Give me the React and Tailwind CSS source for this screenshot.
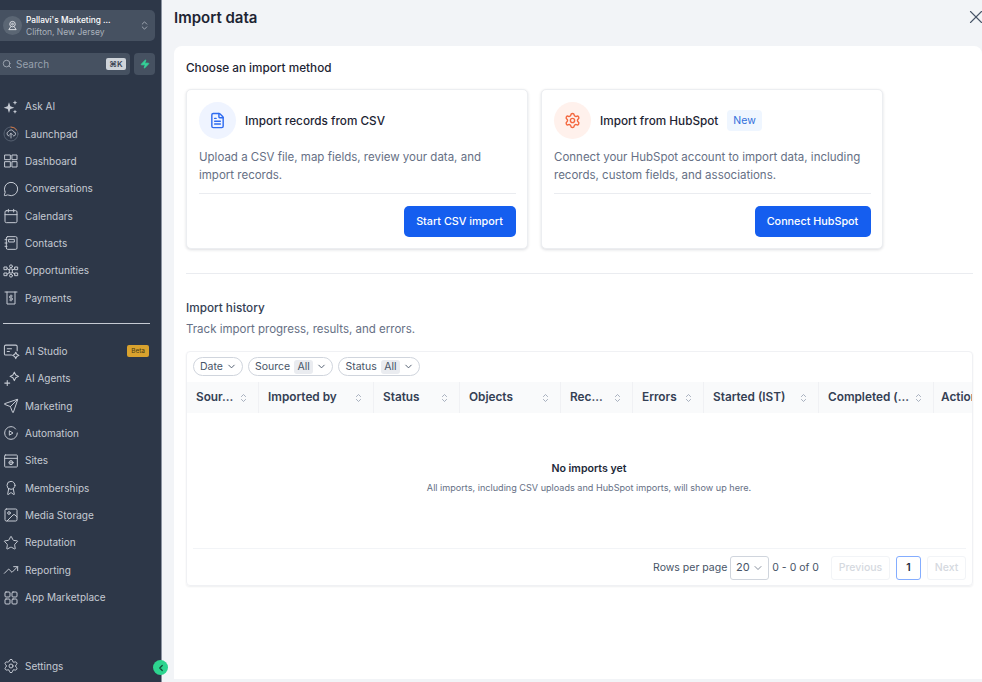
import React from "react";
import { ChevronDown, ChevronLeft, ChevronsUpDown, Search, Zap, X, MessageCircle, Calendar, Send, Star, TrendingUp, Settings, Image, Award, FileText } from "lucide-react";

const S = ({ children, className = "" }) => (
  <svg viewBox="0 0 24 24" fill="none" stroke="currentColor" strokeWidth="1.500" strokeLinecap="round" strokeLinejoin="round" className={className}>{children}</svg>
);
const ic = "w-[16px] h-[16px]";
const AskAI = () => (
  <svg viewBox="0 0 24 24" className={ic} fill="currentColor"><path d="M9 5l2 6 6 2-6 2-2 6-2-6-6-2 6-2z" /><path d="M18 2l1 2.500L21.500 5.500 19 6.500 18 9l-1-2.500L14.500 5.500 17 4.500zM18 16l1 2 2 1-2 1-1 2-1-2-2-1 2-1z" /></svg>
);
const Launch = () => (
  <svg viewBox="0 0 24 24" className="w-[16px] h-[16px]" fill="none" stroke="currentColor" strokeWidth="1.300" strokeLinecap="round" strokeLinejoin="round">
    <circle cx="12" cy="12" r="10.500" stroke="#5b6676" />
    <path d="M12 1.500a10.500 10.500 0 0 1 8.500 4.500" stroke="#e8793a" />
    <path d="M9 15a3.500 3.500 0 0 1-.5-6.800 4 4 0 0 1 7.500.6A3 3 0 0 1 15.500 15M12 18v-7M10 13l2-2 2 2" />
  </svg>
);
const Dash = () => <S className={ic}><rect x="3" y="3" width="8" height="7" /><rect x="14" y="3" width="7" height="7" /><rect x="3" y="13" width="8" height="8" /><rect x="14" y="13" width="7" height="8" /></S>;
const Contacts = () => <S className={ic}><rect x="5" y="2.500" width="16" height="19" rx="2" /><rect x="9" y="6.500" width="8" height="4" /><path d="M3 7h3M3 12h3M3 17h3" /></S>;
const Opp = () => <S className={ic}><circle cx="12" cy="5" r="2.200" /><circle cx="12" cy="19" r="2.200" /><rect x="10" y="9" width="4" height="6" /><path d="M2 6h4v4H2zM18 6h4v4h-4zM2 15h4v4H2zM18 15h4v4h-4zM6 8l4 3M18 8l-4 3M6 17l4-3M18 17l-4-3" /></S>;
const Pay = () => <S className={ic}><path d="M3 3h18M6 3v18h12V3" /><path d="M14 9h-3a1.500 1.500 0 0 0 0 3h2a1.500 1.500 0 0 1 0 3h-3M12 7.500v9" strokeWidth="1.300" /></S>;
const Studio = () => <S className="w-[17px] h-[17px]"><path d="M12 17H4a2 2 0 0 1-2-2V5a2 2 0 0 1 2-2h14a2 2 0 0 1 2 2v6" /><path d="M6 8h6M6 12h3" /><path d="M18 13l1.500 3 3 1.500-3 1.500-1.500 3-1.500-3-3-1.500 3-1.500z" /></S>;
const Agents = () => <S className="w-[17px] h-[17px]"><path d="M16 3l2 4 4 2-4 2-2 4-2-4-4-2 4-2z" /><path d="M6 15v7M2.500 18.500h7" /></S>;
const Auto = () => <S className={ic}><path d="M21.500 12A9.500 9.500 0 1 1 12 2.500c3 0 5.500 1.300 7 3.500" /><path d="M10 9l5 3-5 3z" /></S>;
const Sites = () => <S className={ic}><rect x="2.500" y="3" width="19" height="18" rx="1" /><path d="M2.500 8h19" /><circle cx="12" cy="14.500" r="3" /><path d="M9 14.500h6M12 11.500v6" strokeWidth="1" /></S>;
const Market = () => <S className={ic}><rect x="3" y="3" width="7.500" height="7.500" rx="1.500" /><rect x="13.500" y="3" width="7.500" height="7.500" rx="1.500" /><rect x="3" y="13.500" width="7.500" height="7.500" rx="1.500" /><rect x="13.500" y="13.500" width="7.500" height="7.500" rx="1.500" /></S>;

const L = (I) => () => <I className={ic} strokeWidth={1.500} />;
const top = [
  ["Ask AI", AskAI], ["Launchpad", Launch], ["Dashboard", Dash], ["Conversations", L(MessageCircle)],
  ["Calendars", L(Calendar)], ["Contacts", Contacts], ["Opportunities", Opp], ["Payments", Pay],
];
const bottom = [
  ["AI Studio", Studio], ["AI Agents", Agents], ["Marketing", L(Send)], ["Automation", Auto], ["Sites", Sites],
  ["Memberships", L(Award)], ["Media Storage", L(Image)], ["Reputation", L(Star)], ["Reporting", L(TrendingUp)], ["App Marketplace", Market],
];

function NavRow({ label, Icon }) {
  return (
    <div className="h-[27.35px] flex items-center pl-[3px] pr-[12px] text-[#c5cad3] text-[10px] font-normal">
      <span className="w-[22px] flex items-center shrink-0"><Icon /></span>
      <span className="flex-1">{label}</span>
      {label === "AI Studio" && <span className="bg-[#d9a22e] text-[#4a3a14] text-[6.500px] rounded-[2px] px-[4px] h-[12px] flex items-center">Beta</span>}
    </div>
  );
}

function Sidebar() {
  return (
    <aside className="relative w-[162px] shrink-0 h-full bg-[#2d3748] border-r border-[#8b93a1] flex flex-col">
      <div className="mt-[10px] w-[155px] h-[31px] bg-[#465161] rounded-r-[5px] flex items-center pl-[3px] pr-[5px]">
        <span className="w-[19px] h-[19px] rounded-full bg-[#5b6674] flex items-center justify-center text-[#e5e7eb] shrink-0">
          <svg viewBox="0 0 24 24" className="w-[11px] h-[11px]" fill="none" stroke="currentColor" strokeWidth="2"><circle cx="12" cy="9" r="6" /><circle cx="12" cy="9" r="2" /><path d="M8 15l-4 6h16l-4-6" /></svg>
        </span>
        <div className="ml-[4px] pt-[2px] flex-1 min-w-0 leading-none">
          <div className="text-[8.300px] text-white font-medium leading-[11px] whitespace-nowrap">Pallavi's Marketing ...</div>
          <div className="text-[8.500px] text-[#aab1bc] leading-[12px] whitespace-nowrap">Clifton, New Jersey</div>
        </div>
        <ChevronsUpDown className="w-[11px] h-[15px] text-[#c5cad3]" strokeWidth={1.500} />
      </div>
      <div className="mt-[12px] flex h-[22px] gap-[4px]">
        <div className="w-[130px] bg-[#465161] rounded-r-[4px] flex items-center pl-[2px] pr-[4px]">
          <Search className="w-[10px] h-[10px] text-[#aab1bc]" strokeWidth={2} />
          <span className="ml-[4px] flex-1 text-[10px] text-[#98a1ae]">Search</span>
          <span className="h-[12px] w-[20px] bg-[#cfd4da] rounded-[2px] text-[#374151] text-[8px] font-semibold flex items-center justify-center">⌘K</span>
        </div>
        <div className="w-[21px] bg-[#465161] rounded-[4px] flex items-center justify-center">
          <Zap className="w-[10px] h-[10px] text-[#34d399]" fill="#34d399" />
        </div>
      </div>
      <nav className="mt-[18px]">
        {top.map(([l, I]) => <NavRow key={l} label={l} Icon={I} />)}
      </nav>
      <div className="ml-[3px] w-[147px] mt-[11px] mb-[14px] h-px bg-[#c5cad3]" />
      <nav>
        {bottom.map(([l, I]) => <NavRow key={l} label={l} Icon={I} />)}
      </nav>
      <div className="mt-auto mb-[2px]">
        <NavRow label="Settings" Icon={L(Settings)} />
      </div>
      <span className="absolute right-[-7px] bottom-[7px] w-[15px] h-[15px] rounded-full bg-[#2dd48f] flex items-center justify-center text-[#134e3a]">
        <ChevronLeft className="w-[10px] h-[10px]" strokeWidth={3} />
      </span>
    </aside>
  );
}

function MethodCard({ iconBg, icon, title, badge, desc, cta, btnW }) {
  return (
    <div className="w-[342px] h-[160px] rounded-[5px] bg-white border border-[#eceef1] shadow-[0_1px_3px_rgba(16,24,40,0.14)] pl-[12px] pr-[11.500px] pt-[12px] flex flex-col">
      <div className="flex items-center h-[37px]">
        <span className={`w-[37px] h-[37px] rounded-full flex items-center justify-center ${iconBg}`}>{icon}</span>
        <span className="ml-[9px] pt-[2px] text-[11.750px] font-medium text-[#1d2433]">{title}</span>
        {badge && <span className="ml-[9px] h-[21px] px-[6px] rounded-[4px] bg-[#eff6ff] text-[#2f6fdb] text-[10.500px] flex items-center">New</span>}
      </div>
      <p className="mt-[9px] text-[11.500px] leading-[18.300px] text-[#667085] whitespace-pre-line">{desc}</p>
      <div className="mt-[8px] border-t border-[#eaecf0] flex justify-end pt-[12px]">
        <button className={`h-[31px] pt-[1px] rounded-[5px] bg-[#155eef] text-white text-[10.800px] font-medium ${btnW}`}>{cta}</button>
      </div>
    </div>
  );
}

const SortIcon = () => (
  <svg viewBox="0 0 10 14" className="w-[7px] h-[10px] text-[#98a2b3] shrink-0" fill="none" stroke="currentColor" strokeWidth="1.200" strokeLinecap="round" strokeLinejoin="round"><path d="M2 5l3-3 3 3M2 9l3 3 3-3" /></svg>
);

const cols = [["Sour...", 72], ["Imported by", 115], ["Status", 86], ["Objects", 101], ["Rec...", 72], ["Errors", 71], ["Started (IST)", 115], ["Completed (...", 115], ["Actions", 60]];

function Chip({ label, val }) {
  return (
    <span className="h-[19px] rounded-full border border-[#d0d5dd] flex items-center pl-[6px] pr-[5px] text-[10.500px] text-[#475467]">
      {label}
      {val && <span className="ml-[4px] px-[3.500px] rounded-[3px] bg-[#eaecf0] text-[#475467] leading-[14px]">{val}</span>}
      <ChevronDown className="ml-[3px] w-[11px] h-[11px]" />
    </span>
  );
}

function Table() {
  return (
    <div className="mt-[14px] w-[787px] h-[235px] rounded-[4px] border border-[#f0f1f4] shadow-[0_1px_2px_rgba(16,24,40,0.07)] flex flex-col overflow-hidden">
      <div className="h-[30px] pb-[1px] flex items-center gap-[5px] pl-[6px] shrink-0">
        <Chip label="Date" />
        <Chip label="Source" val="All" />
        <Chip label="Status" val="All" />
      </div>
      <div className="h-[31px] bg-[#f9fafb] flex shrink-0 overflow-hidden">
        {cols.map(([c, w], i) => (
          <div key={c} style={{ width: w }} className={`shrink-0 flex items-center justify-between pt-[1px] text-[11.800px] font-semibold text-[#344054] whitespace-nowrap ${i < cols.length - 1 ? "pl-[9px] pr-[11px] border-r border-[#f0f1f4]" : "pl-[7px]"}`}>
            <span>{c}</span>
            {i < cols.length - 1 && <SortIcon />}
          </div>
        ))}
      </div>
      <div className="flex-1 flex flex-col items-center pt-[49px] pl-[19px]">
        <div className="text-[10.600px] font-semibold text-[#1d2939] leading-[14px]">No imports yet</div>
        <div className="mt-[6px] text-[9.100px] text-[#667085] leading-[11px]">All imports, including CSV uploads and HubSpot imports, will show up here.</div>
      </div>
      <div className="mx-[6px] border-t border-[#f2f4f7] h-[37px] pt-[1px] flex items-center justify-end shrink-0 text-[10.500px] text-[#475467]">
        <span>Rows per page</span>
        <span className="ml-[3px] w-[39px] h-[24px] rounded-[3px] border border-[#d0d5dd] flex items-center justify-center gap-[2px] text-[11px]">20 <ChevronDown className="w-[12px] h-[12px]" strokeWidth={1.300} /></span>
        <span className="ml-[3px]">0 - 0 of 0</span>
        <span className="ml-[12px] w-[59px] h-[24px] rounded-[3px] border border-[#f2f4f7] flex items-center justify-center text-[#d5d9e0] font-medium">Previous</span>
        <span className="ml-[6px] w-[25px] h-[24px] rounded-[3px] border border-[#84adff] flex items-center justify-center text-[#1d2939] font-semibold">1</span>
        <span className="ml-[6px] w-[39px] h-[24px] rounded-[3px] border border-[#f2f4f7] flex items-center justify-center text-[#d5d9e0] font-medium">Next</span>
      </div>
    </div>
  );
}

export default function App() {
  return (
    <div className="w-[982px] h-[682px] flex overflow-hidden bg-[#f2f4f7] [font-family:Inter,sans-serif]">
      <Sidebar />
      <main className="flex-1 min-w-0 flex flex-col pl-[12px]">
        <header className="h-[46px] shrink-0 relative">
          <h1 className="pt-[8px] text-[15px] leading-[20px] font-semibold text-[#1d2433]">Import data</h1>
          <X className="absolute right-[-5px] top-[6px] w-[22px] h-[22px] text-[#475467]" strokeWidth={1.200} />
        </header>
        <section className="h-[633px] bg-white rounded-tl-[8px] rounded-tr-[8px] pl-[12px] pr-[9px]">
          <h2 className="pt-[14px] text-[11.750px] leading-[16px] font-medium text-[#1d2433]">Choose an import method</h2>
          <div className="mt-[13px] flex gap-[13px]">
            <MethodCard iconBg="bg-[#eff4ff]" icon={<FileText className="w-[17px] h-[17px] text-[#2e6bf0]" strokeWidth={2} />} title="Import records from CSV" desc={"Upload a CSV file, map fields, review your data, and\nimport records."} cta="Start CSV import" btnW="w-[112px]" />
            <MethodCard iconBg="bg-[#fff1ec]" icon={<Settings className="w-[17px] h-[17px] text-[#f4683f]" strokeWidth={2} />} title="Import from HubSpot" badge desc={"Connect your HubSpot account to import data, including\nrecords, custom fields, and associations."} cta="Connect HubSpot" btnW="w-[116px]" />
          </div>
          <div className="mt-[24px] w-[787px] h-px bg-[#eaecf0]" />
          <h2 className="mt-[26px] text-[11.750px] leading-[16px] font-medium text-[#344054]">Import history</h2>
          <p className="mt-[5px] text-[11.500px] leading-[16px] text-[#667085]">Track import progress, results, and errors.</p>
          <Table />
        </section>
      </main>
    </div>
  );
}
